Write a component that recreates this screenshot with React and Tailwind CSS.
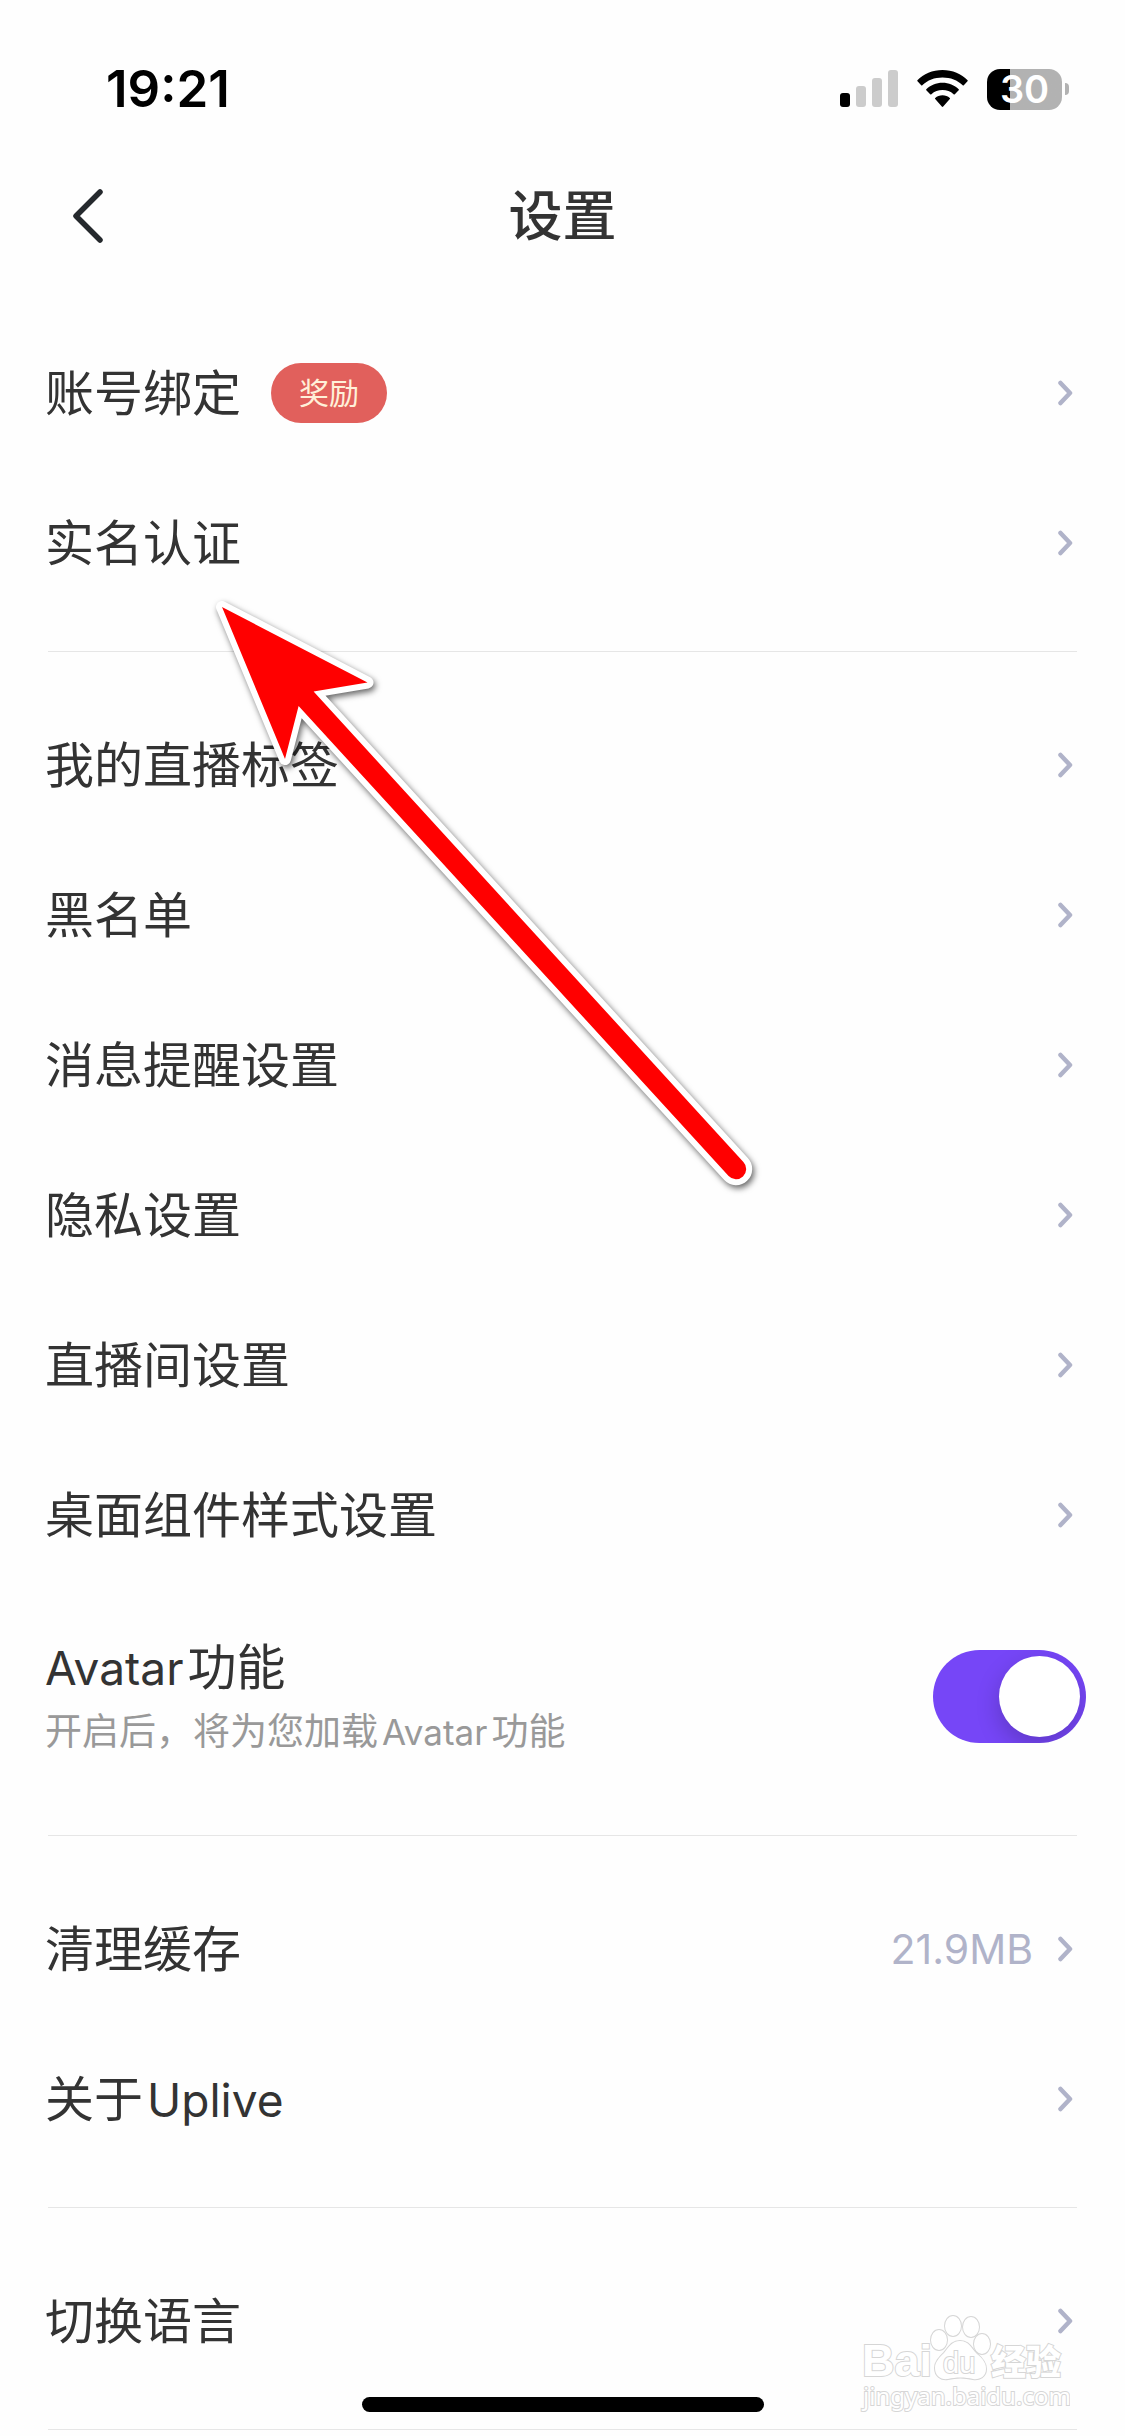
import React, { useState } from 'react';

const SECTIONS = [
    [
        { label: '账号绑定', badge: '奖励' },
        { label: '实名认证' },
    ],
    [
        { label: '我的直播标签' },
        { label: '黑名单' },
        { label: '消息提醒设置' },
        { label: '隐私设置' },
        { label: '直播间设置' },
        { label: '桌面组件样式设置' },
        { label: 'Avatar功能', hint: '开启后，将为您加载Avatar功能', toggle: true },
    ],
    [
        { label: '清理缓存', value: '21.9MB' },
        { label: '关于Uplive' },
    ],
    [
        { label: '切换语言' },
    ],
];

const StatusBar = () => (
    <div className="flex items-center justify-between h-[142px] pl-[106px] pr-14 pt-9 text-black">
        <span className="text-[51px] leading-[60px] font-semibold">19:21</span>
        <div className="flex items-center">
            <svg width="58" height="38" viewBox="0 0 58 38">
                <rect x="0" y="23" width="10" height="14" rx="3" />
                <rect x="16" y="16" width="10" height="21" rx="3" fill="#ccc" />
                <rect x="32" y="8" width="10" height="29" rx="3" fill="#ccc" />
                <rect x="48" y="0" width="10" height="37" rx="3" fill="#ccc" />
            </svg>
            <svg className="ml-[19px]" width="51" height="38" viewBox="0 0 51 38">
                <path d="M25.500 0C35.500 0 44.500 4 50.600 10.200Q51 10.800 50.500 11.300L46.800 15.200Q46.200 15.600 45.700 15.200C40.500 10.200 33.500 7.500 25.500 7.500S10.500 10.200 5.300 15.200Q4.800 15.600 4.200 15.200L.5 11.300Q0 10.800 .4 10.200C6.500 4 15.500 0 25.500 0Z" />
                <path d="M25.500 12.700C31.800 12.700 37.500 15.200 41.700 19.200Q42.200 19.800 41.700 20.300L37.800 24.200Q37.200 24.700 36.600 24.200C33.600 21.600 29.700 20.100 25.500 20.100S17.400 21.600 14.400 24.200Q13.800 24.700 13.200 24.200L9.300 20.300Q8.800 19.800 9.300 19.200C13.500 15.200 19.200 12.700 25.500 12.700Z" />
                <path d="M25.500 25.200C28.300 25.200 30.900 26.200 32.800 27.900Q33.400 28.500 32.800 29.100L26.200 36.600Q25.500 37.200 24.800 36.600L18.200 29.100Q17.600 28.500 18.200 27.900C20.100 26.200 22.700 25.200 25.500 25.200Z" />
            </svg>
            <div className="ml-[19px] flex items-center gap-[3px]">
                <div className="flex items-center justify-center w-[75px] h-[41px] rounded-[13px] bg-linear-to-r from-black from-[31%] to-[#b2b2b2] to-[31%] text-white text-[38px] leading-[41px] font-semibold">
                    30
                </div>
                <div className="w-1 h-3 rounded-r-full bg-[#b2b2b2]" />
            </div>
        </div>
    </div>
);

const Header = () => (
    <header className="grid grid-cols-3 items-center h-[148px]">
        <button className="justify-self-start ml-12 p-6" aria-label="返回">
            <svg width="32" height="56" viewBox="0 0 32 56" fill="none" stroke="#25292d" strokeWidth="5.500" strokeLinecap="round" strokeLinejoin="round">
                <path d="M28 4L4 28L28 52" />
            </svg>
        </button>
        <h1 className="justify-self-center pt-0.5 text-[54px] leading-[80px] font-medium">设置</h1>
    </header>
);

const Chevron = () => (
    <svg width="16" height="26" viewBox="0 0 16 26" fill="none" stroke="#b0b3c9" strokeWidth="4.500" strokeLinecap="round" strokeLinejoin="round">
        <path d="M3.500 3L13 13L3.500 23" />
    </svg>
);

// Latin words sit a touch smaller than the Chinese around them
const MixedText = ({ text, latin }) =>
    text.split(/([A-Za-z]+)/).filter(Boolean).map((part, i) =>
        /[A-Za-z]/.test(part) ? (
            <span key={i} className={i === 0 ? `mr-1 ${latin}` : `mx-1 ${latin}`}>{part}</span>
        ) : (
            part
        )
    );

const Row = ({ label, badge, value }) => (
    <button className="flex items-center w-full h-[150px] pl-[45px] pr-[52px] text-left">
        <span className="pt-0.5 text-[49px] leading-[72px]">
            <MixedText text={label} latin="text-[46px]" />
        </span>
        {badge && (
            <span className="ml-[30px] px-7 rounded-full bg-[#e1605c] text-[#fff0d9] text-[30px] leading-[60px]">
                {badge}
            </span>
        )}
        <span className="ml-auto mr-6 text-[41px] leading-[60px] text-[#b0b3c9]">{value}</span>
        <Chevron />
    </button>
);

const ToggleRow = ({ label, hint }) => {
    const [on, setOn] = useState(true);

    return (
        <label className="flex items-center justify-between h-[212px] pl-[45px] pr-[39px]">
            <span className="flex flex-col">
                <span className="text-[49px] leading-[72px]">
                    <MixedText text={label} latin="text-[46px]" />
                </span>
                <span className="text-[37px] leading-[56px] text-[#999]">
                    <MixedText text={hint} latin="text-[35px]" />
                </span>
            </span>
            <input type="checkbox" className="peer sr-only" checked={on} onChange={() => setOn(!on)} />
            <span className="flex w-[153px] h-[93px] p-1.5 rounded-full overflow-hidden bg-gray-300 peer-checked:bg-[#7646f7] peer-checked:justify-end">
                <span className="size-[81px] rounded-full bg-white shadow-[0_9px_24px_rgba(0,0,0,0.2)]" />
            </span>
        </label>
    );
};

// Red pointer towards the real-name verification row
const Pointer = () => (
    <svg className="absolute left-[200px] top-[590px] pointer-events-none" width="580" height="620" viewBox="200 590 580 620">
        <path
            d="M222 607L367.500 682.500L313.600 691.500L743.400 1162A10 10 0 0 1 728.600 1176L298.600 706L285 759Z"
            fill="#f00"
            stroke="#fff"
            strokeWidth="12"
            strokeLinejoin="round"
            paintOrder="stroke"
            className="drop-shadow-[2px_3px_3px_rgba(0,0,0,0.6)]"
        />
    </svg>
);

const Watermark = () => (
    <svg
        className="absolute right-[55px] bottom-[18px] pointer-events-none"
        width="210"
        height="108"
        viewBox="0 0 210 108"
        fill="#fff"
        stroke="#d6d6d6"
        strokeWidth="2"
        paintOrder="stroke"
    >
        <text x="2" y="66" fontSize="45" fontWeight="700" fontFamily="Liberation Sans, Arial, sans-serif">Bai</text>
        <ellipse cx="79" cy="30" rx="8" ry="10" />
        <ellipse cx="93" cy="16" rx="8" ry="10" />
        <ellipse cx="111" cy="17" rx="8" ry="10" />
        <ellipse cx="122" cy="34" rx="8" ry="10" />
        <path d="M100 31C109 31 111 38 117 44C123 49 126 53 126 59C126 67 119 70 113 69C105 67 96 67 88 69C81 70 75 66 75 58C75 52 79 48 84 43C89 37 92 31 100 31Z" />
        <text x="83" y="63" fontSize="29" fontFamily="Liberation Sans, Arial, sans-serif">du</text>
        <text x="131" y="65" fontSize="35" fontWeight="900" fontFamily="Noto Sans CJK SC, sans-serif">经验</text>
        <text x="3" y="95" fontSize="24" fontFamily="Noto Sans, sans-serif">jingyan.baidu.com</text>
    </svg>
);

const App = () => {
    return (
        <div className="relative min-h-screen overflow-hidden bg-[#fefefe] text-[#333] font-['Inter','Noto_Sans_CJK_SC',sans-serif]">
            <StatusBar />
            <Header />

            <main className="flex flex-col gap-[38px] pt-7">
                {SECTIONS.map((rows, i) => (
                    <section key={i}>
                        {rows.map((row) =>
                            row.toggle ? <ToggleRow key={row.label} {...row} /> : <Row key={row.label} {...row} />
                        )}
                        <hr className="mx-12 mt-[33px] border-[#e6e6e6]" />
                    </section>
                ))}
            </main>

            <Pointer />
            <Watermark />

            {/* Home indicator */}
            <div className="absolute bottom-6 left-1/2 -translate-x-1/2 w-[402px] h-[15px] rounded-full bg-black" />
        </div>
    );
};

export default App;
